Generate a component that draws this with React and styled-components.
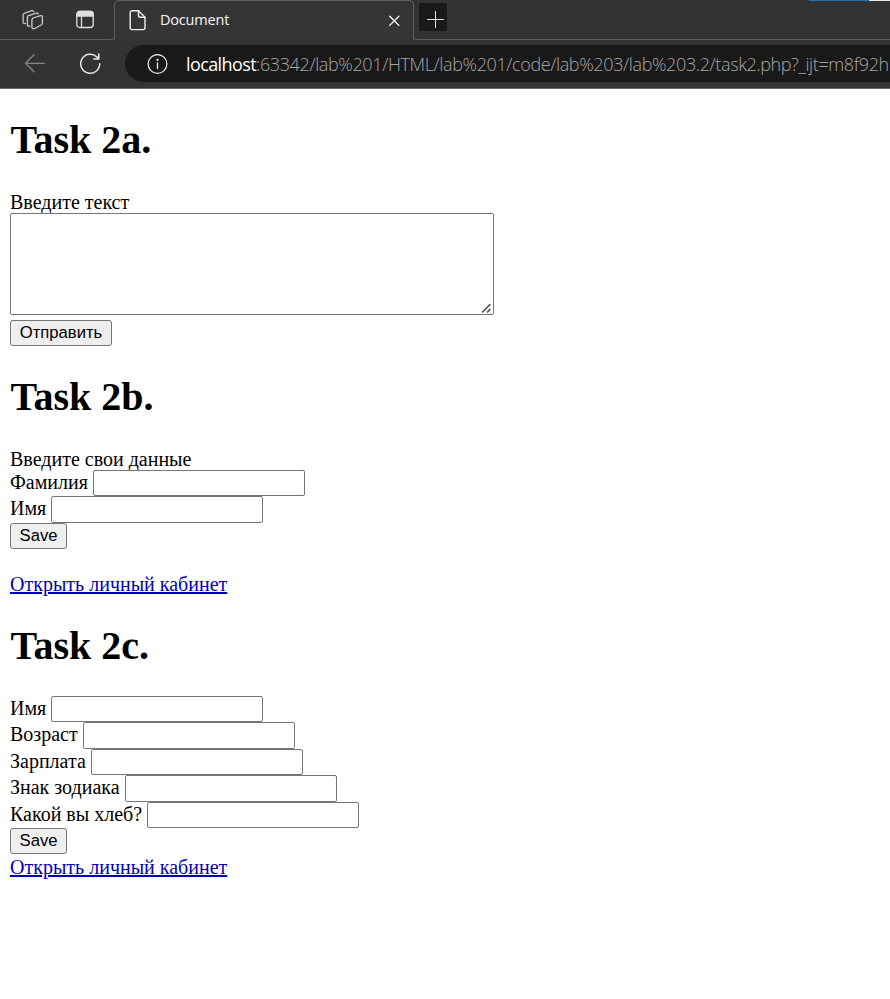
import React from "react";
import styled, { createGlobalStyle } from "styled-components";

const GlobalStyle = createGlobalStyle`
  * { box-sizing: border-box; }
  body { margin: 0; background: #fff; overflow: hidden; }
`;

const Window = styled.div`
  width: 890px;
  height: 999px;
  overflow: hidden;
  background: #fff;
`;

const TabStrip = styled.div`
  position: relative;
  display: flex;
  height: 40px;
  background: #333;
`;

const StripTools = styled.div`
  display: flex;
  align-items: center;
  gap: 32px;
  width: 115px;
  padding-left: 21px;
  border-bottom: 1px solid #606060;
  border-bottom-right-radius: 4px;
`;

const Tab = styled.div`
  display: flex;
  align-items: center;
  width: 300px;
  margin-left: -1px;
  padding: 0 13px 0 14px;
  border: 1px solid #606060;
  border-bottom: 0;
  border-radius: 5px 5px 0 0;
  background: #353535;
`;

const TabTitle = styled.span`
  flex: 1;
  margin-left: 13px;
  padding-bottom: 2px;
  font: 14.5px/20px "Open Sans", sans-serif;
  letter-spacing: -0.2px;
  color: #f5f5f5;
`;

const StripRest = styled.div`
  flex: 1;
  margin-left: -1px;
  padding: 3px 0 0 6px;
  border-bottom: 1px solid #606060;
  border-bottom-left-radius: 4px;
`;

const NewTab = styled.div`
  width: 28px;
  height: 28px;
  border-radius: 2px;
  background: #191919;
`;

const EdgeAccent = styled.div`
  position: absolute;
  top: 0;
  right: 0;
  width: 81px;
  height: 1px;
  background: linear-gradient(90deg, #2870a8 60px, #e4e8e8 60px);
`;

const Toolbar = styled.div`
  display: flex;
  align-items: center;
  height: 49px;
  padding-left: 24px;
  background: #333;
  border-bottom: 1px solid #696969;
`;

const AddressBar = styled.div`
  display: flex;
  align-items: center;
  flex: 1;
  height: 37px;
  margin: 0 0 1px 24px;
  padding: 1px 0 0 22px;
  overflow: hidden;
  border-radius: 19px 0 0 19px;
  background: #191919;
`;

const Url = styled.span`
  margin-left: 18px;
  white-space: nowrap;
  font: 300 18px/24px "Open Sans", sans-serif;
  letter-spacing: -0.38px;
  color: #a8a8a8;
`;

const Host = styled.span`
  font-weight: 400;
  letter-spacing: -0.6px;
  color: #fff;
`;

const Icon = styled.svg`
  display: block;
  flex: none;
  fill: none;
  stroke: ${(p) => p.$color || "#e8e8e8"};
  stroke-width: ${(p) => p.$weight || 1.3};
  stroke-linecap: round;
  stroke-linejoin: round;
`;

const BackIcon = styled(Icon)`
  margin-right: 34px;
`;

const Page = styled.main`
  padding: 28px 10px 0;
  font: 20px/25px "Liberation Serif", serif;
  color: #000;
`;

const Section = styled.section`
  height: ${(p) => p.$height}px;
`;

const Heading = styled.h1`
  height: 46px;
  margin: 0 0 27px;
  padding-left: 0.5px;
  font-size: 40px;
  line-height: 46px;
  white-space: nowrap;
`;

const Prompt = styled.div`
  height: 23px;
`;

const TextAreaFrame = styled.div`
  position: relative;
  width: 484px;
  margin-bottom: 5px;
`;

const TextArea = styled.textarea`
  display: block;
  width: 484px;
  height: 102px;
  margin: 0;
  border: 1px solid #767676;
  border-radius: 2px;
  background: #fff;
  resize: none;
  outline: 0;
`;

const FieldRow = styled.label`
  display: flex;
  height: 26.4px;
`;

const FieldName = styled.span`
  width: ${(p) => p.$width}px;
  white-space: nowrap;
`;

const Input = styled.input`
  width: 212px;
  height: 26.4px;
  border: 1px solid #767676;
  border-radius: 2px;
  outline: 0;
`;

const Button = styled.button`
  display: block;
  width: ${(p) => p.$width}px;
  height: 26.4px;
  padding: 0;
  border: 1px solid #767676;
  border-radius: 3px;
  background: #efefef;
  font: 16.67px/22px "Liberation Sans", sans-serif;
  color: #000;
`;

const CabinetLink = styled.a`
  display: block;
  width: fit-content;
  margin-top: ${(p) => p.$gap || 0}px;
  color: #0000b8;
  text-decoration: underline;
  text-decoration-thickness: 2px;
  text-underline-offset: 1px;
`;

const Grip = styled(Icon)`
  position: absolute;
  right: 2px;
  bottom: 1px;
`;

function Field({ name, width }) {
  return (
    <FieldRow>
      <FieldName $width={width}>{name}</FieldName>
      <Input type="text" />
    </FieldRow>
  );
}

function BrowserChrome() {
  return (
    <header>
      <TabStrip>
        <StripTools>
          <Icon width="23" height="22" viewBox="0 0 23 22" $color="#c8c8c8" $weight={1.3}>
            <path d="M11.7 9 19.8 6.6q1.6-.3 1.6 1v6.5q0 1-.9 1.6l-6.4 3.6q-3.2 1.2-3.2-1.4v-7.2q0-.8.8-1.1Z" />
            <path d="M8.8 17.2c-1.8.2-2.4-.4-2.4-1.7V8.1q0-1.2 1-1.5l7.9-2.5q1.6-.4 1.8 1" />
            <path d="M4.4 14.5c-1.6.2-2.3-.3-2.3-1.6V5.9q0-1.2 1-1.5l7.7-2.7q1.5-.4 1.8.9" />
          </Icon>
          <Icon width="18" height="19" viewBox="0 0 18 19" $color="#dedede">
            <rect x=".8" y="1.5" width="16.4" height="16" rx="3" />
            <path d="M1 6V4a2.5 2.5 0 0 1 2.5-2.5h11A2.5 2.5 0 0 1 17 4v2Z" fill="#dedede" />
            <path d="M5.5 6v11" />
          </Icon>
        </StripTools>
        <Tab>
          <Icon width="18" height="21" viewBox="0 0 18 21" $color="#f0f0f0" $weight={1.4}>
            <path d="M3.2.8h6.3L16 7.3v10.3q0 2-2 2H3.2q-2 0-2-2V2.8q0-2 2-2Z" />
            <path d="M9.5.8v5q0 1.5 1.5 1.5h5" />
          </Icon>
          <TabTitle>Document</TabTitle>
          <Icon width="12" height="12" viewBox="0 0 12 12" $color="#fff">
            <path d="m1.7 1.2 9.2 9.2M10.9 1.2l-9.2 9.2" />
          </Icon>
        </Tab>
        <StripRest>
          <NewTab>
            <Icon width="28" height="28" viewBox="0 0 28 28" $weight={1}>
              <path d="M8.5 16.5h16M16.5 8.5v16" />
            </Icon>
          </NewTab>
        </StripRest>
        <EdgeAccent />
      </TabStrip>
      <Toolbar>
        <BackIcon width="22" height="20" viewBox="0 0 22 20" $color="#858585" $weight={1.3}>
          <path d="M20.5 9.3H1.5M10 .8 1.5 9.3l8.5 8.5" />
        </BackIcon>
        <Icon width="21" height="22" viewBox="0 0 21 22" $weight={1.5}>
          <path d="M19.7 10.7A9.5 9.5 0 1 1 16.8 3.9l2 2M18.8 1v5h-5" />
        </Icon>
        <AddressBar>
          <Icon width="21" height="21" viewBox="0 0 21 21" $weight={1.3}>
            <circle cx="10.5" cy="10" r="9.4" />
            <path d="M10.5 9v5.5" />
            <circle cx="10.5" cy="5.8" r=".5" fill="#e8e8e8" />
          </Icon>
          <Url><Host>localhost</Host>:63342/lab%201/HTML/lab%201/code/lab%203/lab%203.2/task2.php?_ijt=m8f92h</Url>
        </AddressBar>
      </Toolbar>
    </header>
  );
}

export default function App() {
  return (
    <Window>
      <GlobalStyle />
      <BrowserChrome />
      <Page>
        <Section $height={257}>
          <Heading>Task 2a.</Heading>
          <Prompt>Введите текст</Prompt>
          <TextAreaFrame>
            <TextArea />
            <Grip width="11" height="11" viewBox="0 0 11 11" $color="#444" $weight={1.5}>
              <path d="M1.5 9 9 1.5M6.5 9 9 6.5" />
            </Grip>
          </TextAreaFrame>
          <Button $width={102}>Отправить</Button>
        </Section>
        <Section $height={249}>
          <Heading>Task 2b.</Heading>
          <Prompt>Введите свои данные</Prompt>
          <Field name="Фамилия" width={83} />
          <Field name="Имя" width={41} />
          <Button $width={57}>Save</Button>
          <CabinetLink href="#" $gap={22.5}>Открыть личный кабинет</CabinetLink>
        </Section>
        <Section $height={260}>
          <Heading>Task 2c.</Heading>
          <Field name="Имя" width={41} />
          <Field name="Возраст" width={73} />
          <Field name="Зарплата" width={81} />
          <Field name="Знак зодиака" width={115} />
          <Field name="Какой вы хлеб?" width={137} />
          <Button $width={57}>Save</Button>
          <CabinetLink href="#" $gap={0.4}>Открыть личный кабинет</CabinetLink>
        </Section>
      </Page>
    </Window>
  );
}
